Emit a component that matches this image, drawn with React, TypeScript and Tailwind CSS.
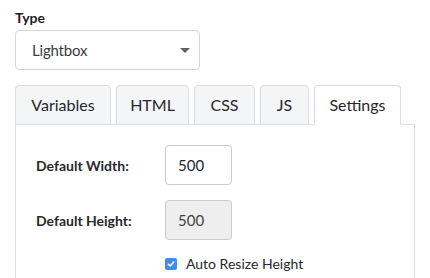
import React from "react";

const tabs = [
    { label: "Variables", width: "w-[96px]" },
    { label: "HTML", width: "w-[73px]" },
    { label: "CSS", width: "w-[61px]" },
    { label: "JS", width: "w-[49px]" },
    { label: "Settings", width: "w-[87px]" },
];

export default function App() {
    const active = "Settings";

    return (
        <div className="w-[430px] h-[278px] overflow-hidden bg-white pl-[15px] pt-[9px] text-[#26282c]" style={{ fontFamily: "Lato, 'Open Sans', sans-serif" }}>
            {/* Type select */}
            <div className="text-[14px] font-bold leading-[18px] text-[#1f2124]">Type</div>
            <div className="mt-[3px] flex h-[40px] w-[185px] items-center justify-between rounded-[4px] border border-[#d4d6da] pl-[16px] pr-[9px] text-[15px] tracking-[-0.2px] text-[#3a3c40]">
                <span>Lightbox</span>
                <svg width="10" height="5" viewBox="0 0 10 5">
                    <path d="M0 0 L10 0 L5 5 Z" fill="#5f6166" />
                </svg>
            </div>

            {/* Tabs */}
            <div className="mt-[15px] flex w-[400px] gap-[5px]">
                {tabs.map((tab) => (
                    <div
                        key={tab.label}
                        className={`relative z-10 flex h-[40px] items-center justify-center rounded-t-[4px] border border-[#dcdde1] text-[16px] ${tab.width} ${
                            tab.label === active ? "border-b-white bg-white" : "bg-[#f4f5f7]"
                        }`}
                    >
                        {tab.label}
                    </div>
                ))}
            </div>

            {/* Settings panel */}
            <div className="-mt-px w-[400px] border border-[#dcdde1] pl-[20px] pt-[20px] pb-[20px]">
                <div className="flex items-center">
                    <div className="w-[129px] text-[14px] font-bold">Default Width:</div>
                    <div className="flex h-[40px] w-[67px] items-center rounded-[4px] border border-[#c9cbcf] pl-[12px] text-[15px]">500</div>
                </div>
                <div className="mt-[15px] flex items-center">
                    <div className="w-[129px] text-[14px] font-bold">Default Height:</div>
                    <div className="flex h-[40px] w-[67px] items-center rounded-[4px] border border-[#c9cbcf] bg-[#eeeeee] pl-[12px] text-[15px] text-[#444]">500</div>
                </div>
                <div className="mt-[13px] ml-[129px] flex items-center gap-[9px]">
                    <span className="flex h-[12px] w-[12px] items-center justify-center rounded-[2px] bg-[#3d8ef0]">
                        <svg width="8" height="8" viewBox="0 0 8 8">
                            <path d="M1.3 4.2 L3.2 6 L6.7 2" stroke="white" strokeWidth="1.6" fill="none" strokeLinecap="round" strokeLinejoin="round" />
                        </svg>
                    </span>
                    <span className="text-[14px]">Auto Resize Height</span>
                </div>
            </div>
        </div>
    );
}
